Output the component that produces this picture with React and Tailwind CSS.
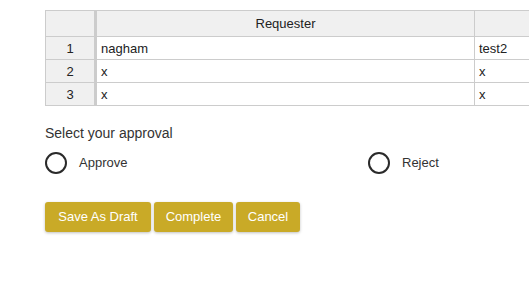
import React, { useState } from 'react';

const rows = [
  { id: 1, requester: 'nagham', other: 'test2' },
  { id: 2, requester: 'x', other: 'x' },
  { id: 3, requester: 'x', other: 'x' },
];

const buttons = [
  { label: 'Save As Draft', width: 'w-[106px]' },
  { label: 'Complete', width: 'w-[79px]' },
  { label: 'Cancel', width: 'w-[64px]' },
];

export default function App() {
  const [approval, setApproval] = useState(null);

  return (
    <div
      className="w-[529px] h-[300px] overflow-hidden bg-white text-[#222]"
      style={{ fontFamily: '"Liberation Sans", Arial, sans-serif' }}
    >
      <div className="pl-[45px] pt-[10px] w-[800px]">
        {/* Grille */}
        <table className="border-collapse text-[13px] leading-none">
          <thead>
            <tr className="h-[26px] bg-[#f0f0f0]">
              <th className="w-[50px] border border-[#cccccc] border-r-[3px]"></th>
              <th className="w-[379px] border border-[#cccccc] font-normal text-center">Requester</th>
              <th className="w-[200px] border border-[#cccccc]"></th>
            </tr>
          </thead>
          <tbody>
            {rows.map(row => (
              <tr key={row.id} className="h-[23px]">
                <td className="bg-[#f0f0f0] border border-[#cccccc] border-r-[3px] text-center">{row.id}</td>
                <td className="border border-[#cccccc] px-1">{row.requester}</td>
                <td className="border border-[#cccccc] px-1">{row.other}</td>
              </tr>
            ))}
          </tbody>
        </table>

        {/* Approbation */}
        <p className="mt-[17px] text-[14px] text-[#333]">Select your approval</p>
        <div className="mt-[8px] grid grid-cols-[323px_323px] text-[13px] text-[#333]">
          {['Approve', 'Reject'].map(label => (
            <label key={label} className="flex items-center gap-[12px] cursor-pointer">
              <span
                onClick={() => setApproval(label)}
                className="w-[22px] h-[22px] rounded-full border-2 border-[#2a2a2a] flex items-center justify-center"
              >
                {approval === label && <span className="w-[10px] h-[10px] rounded-full bg-[#2a2a2a]" />}
              </span>
              {label}
            </label>
          ))}
        </div>

        {/* Boutons */}
        <div className="mt-[28px] flex gap-[3px]">
          {buttons.map(b => (
            <button
              key={b.label}
              className={`${b.width} h-[30px] rounded-[3px] bg-[#c9aa27] text-white text-[13px] shadow-[0_1px_3px_rgba(0,0,0,0.25)]`}
            >
              {b.label}
            </button>
          ))}
        </div>
      </div>
    </div>
  );
}
